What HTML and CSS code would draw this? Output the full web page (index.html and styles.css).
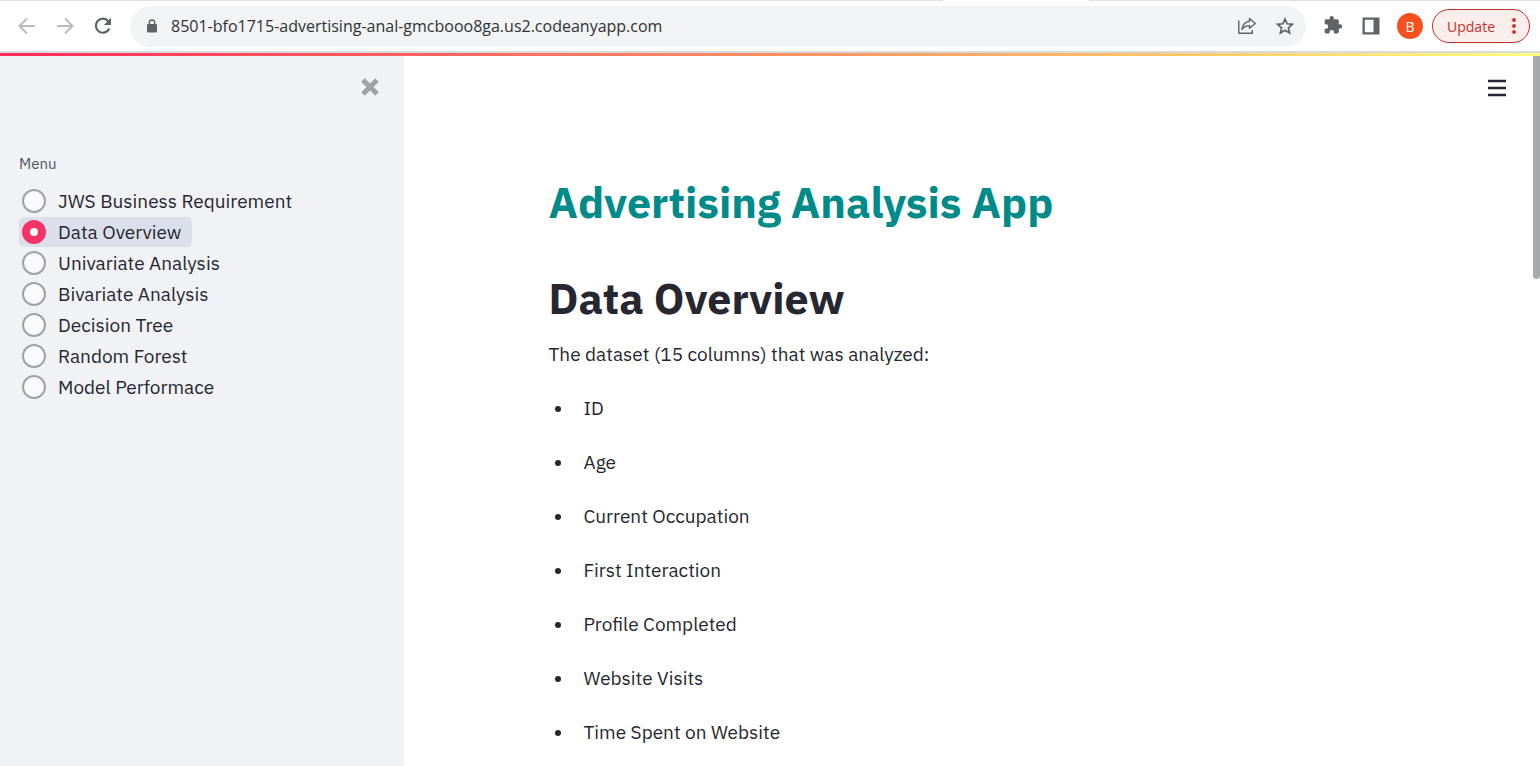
FILE: index.html
```html
<!DOCTYPE html>
<html lang="en">
<head>
<meta charset="utf-8">
<title>Advertising Analysis App</title>
<link rel="stylesheet" href="styles.css">
</head>
<body>
<header class="toolbar">
  <span class="active-tab"></span>
  <nav class="history" aria-label="History">
    <button class="icon-button faded" aria-label="Back"><svg width="18" height="18" viewBox="0 0 18 18" fill="none" stroke="currentColor" stroke-width="2"><path d="M17 9H2M9 1.500L1.500 9L9 16.500"/></svg></button>
    <button class="icon-button faded" aria-label="Forward"><svg width="18" height="18" viewBox="0 0 18 18" fill="none" stroke="currentColor" stroke-width="2"><path d="M1 9H16M9 1.500L16.500 9L9 16.500"/></svg></button>
    <button class="icon-button" aria-label="Reload"><svg width="18" height="18" viewBox="0 0 18 18"><path d="M15.300 11.500A7 7 0 1 1 14.300 4.300" fill="none" stroke="currentColor" stroke-width="2.200"/><path d="M17 .8V8H9.800Z" fill="currentColor"/></svg></button>
  </nav>
  <div class="address">
    <svg class="lock" width="12" height="14" viewBox="0 0 12 14"><rect x="1" y="5" width="10" height="8.500" rx="1.300" fill="currentColor"/><path d="M3.300 6V3.700a2.700 2.700 0 0 1 5.400 0V6" fill="none" stroke="currentColor" stroke-width="1.400"/></svg>
    <input class="url" type="text" aria-label="Address" value="8501-bfo1715-advertising-anal-gmcbooo8ga.us2.codeanyapp.com">
    <button class="icon-button" aria-label="Share"><svg width="20" height="20" viewBox="0 0 20 20" fill="none" stroke="currentColor" stroke-width="1.400" stroke-linejoin="round"><path d="M1.800 4.500V17.300H15.300V14"/><path d="M12.500 2.500L18.300 7.500L12.500 12.300V9.600C9 9.600 6.700 10.800 5 13.500C5.600 9 8 6 12.500 5.300Z"/></svg></button>
    <button class="icon-button" aria-label="Bookmark"><svg width="18" height="18" viewBox="0 0 18 18" fill="none" stroke="currentColor" stroke-width="1.700"><path d="M9 2L11.100 6.800L16.400 7.300L12.400 10.800L13.600 16L9 13.200L4.400 16L5.600 10.800L1.600 7.300L6.900 6.800Z"/></svg></button>
  </div>
  <div class="actions">
    <button class="icon-button" aria-label="Extensions"><svg width="20" height="20" viewBox="0 1 24 24" fill="currentColor"><path d="M20.500 11H19V7c0-1.100-.9-2-2-2h-4V3.500a2.500 2.500 0 0 0-5 0V5H4c-1.100 0-2 .9-2 2v3.800h1.500a2.700 2.700 0 0 1 0 5.400H2V20c0 1.100.9 2 2 2h3.800v-1.500a2.700 2.700 0 0 1 5.400 0V22H17c1.100 0 2-.9 2-2v-4h1.500a2.500 2.500 0 0 0 0-5Z"/></svg></button>
    <button class="icon-button" aria-label="Side panel"><svg width="18" height="18" viewBox="0 0 18 18"><path fill="currentColor" fill-rule="evenodd" d="M.5.5H17.500V17.500H.5ZM2.800 2.800V15.200H11.500V2.800Z"/></svg></button>
    <button class="avatar">B</button>
    <button class="update">Update<svg width="4" height="16" viewBox="0 0 4 16" fill="currentColor"><circle cx="2" cy="2" r="1.900"/><circle cx="2" cy="8" r="1.900"/><circle cx="2" cy="14" r="1.900"/></svg></button>
  </div>
</header>
<div class="decoration"></div>
<div class="app">
  <aside class="sidebar">
    <button class="icon-button close" aria-label="Close sidebar"><svg width="18" height="18" viewBox="0 0 18 18" stroke="currentColor" stroke-width="5"><path d="M2 2L16 16M16 2L2 16"/></svg></button>
    <fieldset class="menu">
      <legend>Menu</legend>
      <label class="option"><input type="radio" name="page">JWS Business Requirement</label>
      <label class="option"><input type="radio" name="page" checked>Data Overview</label>
      <label class="option"><input type="radio" name="page">Univariate Analysis</label>
      <label class="option"><input type="radio" name="page">Bivariate Analysis</label>
      <label class="option"><input type="radio" name="page">Decision Tree</label>
      <label class="option"><input type="radio" name="page">Random Forest</label>
      <label class="option"><input type="radio" name="page">Model Performace</label>
    </fieldset>
  </aside>
  <main class="main">
    <button class="icon-button hamburger" aria-label="Main menu"><svg width="18" height="18" viewBox="0 0 18 18" fill="currentColor"><path d="M0 .8H18V3.200H0ZM0 7.800H18V10.200H0ZM0 14.800H18V17.200H0Z"/></svg></button>
    <div class="content">
      <h1 class="app-title">Advertising Analysis App</h1>
      <h1 class="page-title">Data Overview</h1>
      <p class="intro">The dataset (15 columns) that was analyzed:</p>
      <ul class="columns">
        <li>ID</li>
        <li>Age</li>
        <li>Current Occupation</li>
        <li>First Interaction</li>
        <li>Profile Completed</li>
        <li>Website Visits</li>
        <li>Time Spent on Website</li>
      </ul>
    </div>
  </main>
  <div class="scrollbar"><div class="thumb"></div></div>
</div>
</body>
</html>
```
FILE: styles.css
```css
* { box-sizing: border-box; }

body {
  margin: 0;
  height: 100vh;
  display: flex;
  flex-direction: column;
  overflow: hidden;
  background: #fff;
  color: #262730;
  font-family: "IBM Plex Sans", Roboto, sans-serif;
  font-size: 19px;
}

button { font: inherit; cursor: pointer; }

.icon-button {
  display: flex;
  padding: 0;
  border: 0;
  background: none;
  color: #5f6368;
}

.faded { color: #babcbe; }

.toolbar {
  position: relative;
  display: flex;
  align-items: center;
  flex: none;
  height: 53px;
  padding: 0 10px 0 18px;
  border-top: 1px solid #dee1e6;
  border-bottom: 2px solid #d9dadd;
  font-family: "Segoe UI", "Open Sans", sans-serif;
}

.active-tab {
  position: absolute;
  top: -1px;
  left: 943px;
  width: 146px;
  height: 1px;
  background: #fff;
}

.history { display: flex; gap: 20px; margin-right: 18px; }

.address {
  display: flex;
  align-items: center;
  flex: 1;
  height: 41px;
  padding: 0 12px 0 16px;
  border-radius: 21px;
  background: #f1f3f4;
}

.lock { color: #5f6368; }

.url {
  flex: 1;
  min-width: 0;
  margin-left: 13px;
  padding: 0;
  border: 0;
  background: none;
  color: #303236;
  font: inherit;
  font-size: 16px;
}

.address .icon-button { margin-left: 19px; }

.actions { display: flex; align-items: center; margin-left: 17px; gap: 19px; }

.avatar {
  width: 26px;
  height: 26px;
  margin-right: -10px;
  margin-left: -2px;
  padding: 0;
  border: 0;
  border-radius: 50%;
  background: #f4511e;
  color: #fff;
  font-size: 14px;
}

.update {
  display: flex;
  align-items: center;
  gap: 17px;
  height: 34px;
  padding: 0 13px 0 14px;
  border: 1px solid #c5302c;
  border-radius: 17px;
  background: #faeeed;
  color: #c5302c;
  font-size: 14px;
}

.decoration {
  flex: none;
  height: 3px;
  background: linear-gradient(90deg, #ff2b5b, #ff8f63 50%, #ffc469 75%, #fffd80);
}

.app { flex: 1; display: flex; min-height: 0; }

.sidebar {
  flex: none;
  width: 404px;
  padding: 22px 19px;
  background: #f0f2f6;
}

.close { margin: 0 6px 0 auto; color: #a0a2a8; }

.menu { margin: 58px 0 0; padding: 0; border: 0; }

.menu legend {
  padding: 0;
  margin-bottom: 12px;
  color: #51535d;
  font-size: 15px;
  line-height: 20px;
}

.option {
  display: flex;
  align-items: center;
  gap: 12px;
  width: fit-content;
  height: 30px;
  margin-bottom: 1px;
  padding: 0 11px 0 3px;
  border-radius: 5px;
}

.option:has(:checked) { background: #dbdfe9; }

.option input {
  appearance: none;
  width: 24px;
  height: 24px;
  margin: 0;
  border: 2px solid #a0a2a8;
  border-radius: 50%;
  background: #fafafc;
}

.option input:checked { border: 8px solid #f63366; background: #fff; }

.main { position: relative; flex: 1; overflow: hidden; }

.hamburger { position: absolute; top: 23px; right: 27px; color: #262730; }

.content { max-width: 880px; margin: 0 auto; padding: 118px 20px 0; }

.app-title, .page-title { margin: 0; font-size: 43px; line-height: 56px; }

.app-title { color: #008b8b; }

.page-title { margin-top: 40px; }

.intro { margin: 12px 0 22px; line-height: 32px; }

.columns { margin: 0; padding-left: 25px; }

.columns li { margin-bottom: 22px; padding-left: 10px; line-height: 32px; }

.scrollbar { flex: none; width: 7px; }

.thumb { height: 223px; border-radius: 0 0 4px 4px; background: #a8a9ac; }
```
